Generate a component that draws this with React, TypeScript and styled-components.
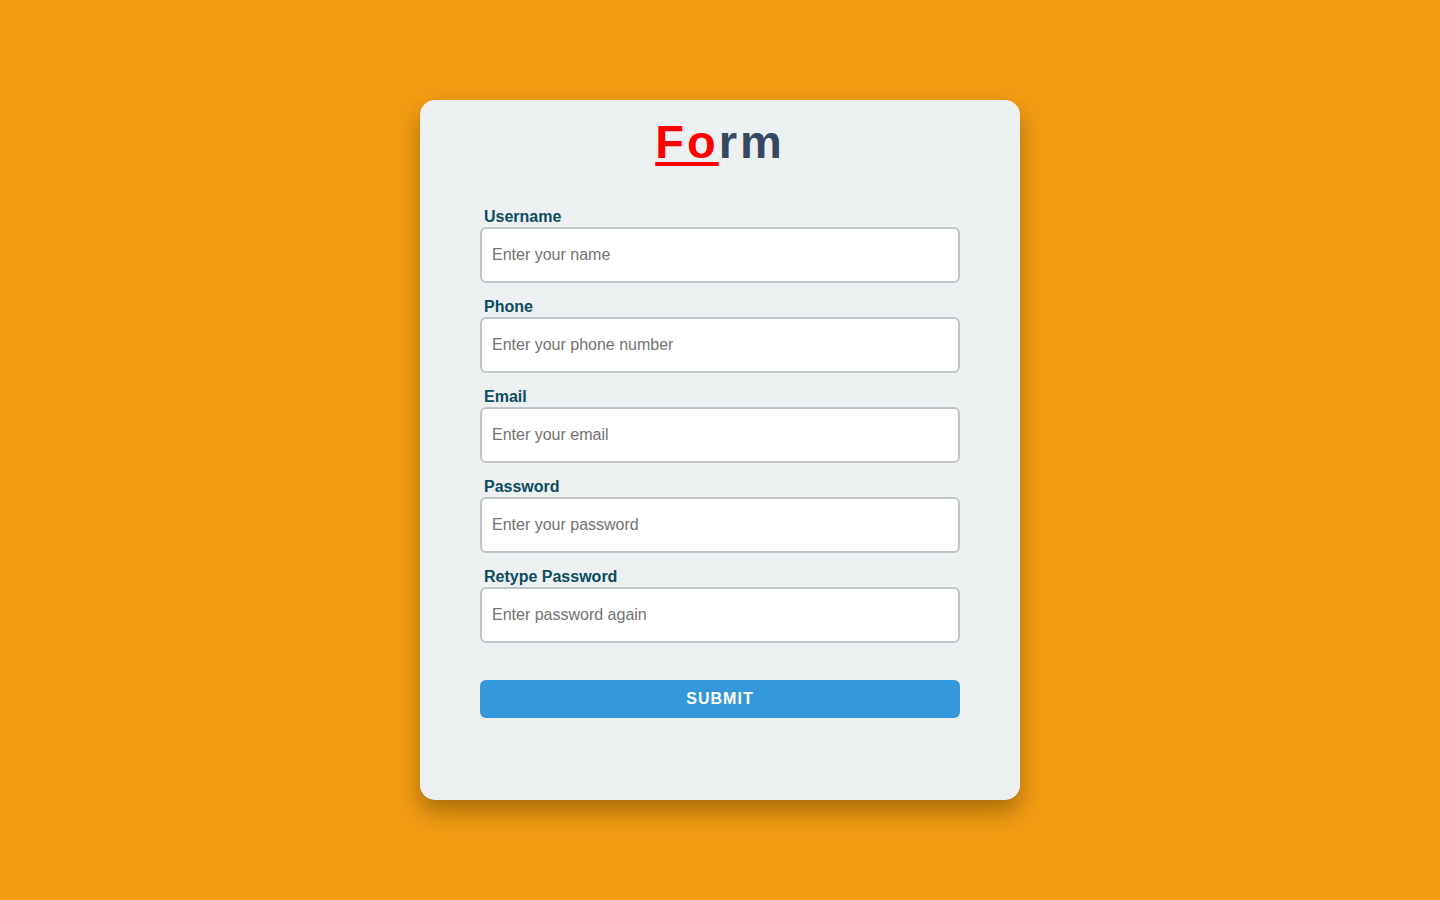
import React from "react";
import styled, { createGlobalStyle } from "styled-components";

const GlobalStyle = createGlobalStyle`
  html, body { margin: 0; padding: 0; }
  body {
    background: #f39c12;
    font-family: "Liberation Sans", Arial, sans-serif;
  }
  * { box-sizing: border-box; }
`;

const Page = styled.div`
  min-height: 100vh;
  display: flex;
  align-items: center;
  justify-content: center;
`;

const Card = styled.div`
  width: 600px;
  height: 700px;
  background: #ecf0f1;
  border-radius: 15px;
  box-shadow: 0 12px 24px rgba(0, 0, 0, 0.3);
  padding: 16px 60px 0;
  display: flex;
  flex-direction: column;
  align-items: stretch;
`;

const Title = styled.h1`
  margin: 0 0 39px;
  text-align: center;
  font-size: 47px;
  line-height: 52px;
  font-weight: 700;
  letter-spacing: 3px;
  color: #34495e;
`;

const Accent = styled.span`
  color: #ff0000;
  text-decoration: underline;
  text-decoration-thickness: 4px;
  text-underline-offset: 4px;
`;

const Form = styled.form`
  display: flex;
  flex-direction: column;
`;

const Field = styled.div`
  display: flex;
  flex-direction: column;
  margin-bottom: 14px;
`;

const Label = styled.label`
  display: block;
  padding-left: 4px;
  font-size: 16px;
  line-height: 20px;
  font-weight: 700;
  color: #0d4b5e;
`;

const Input = styled.input`
  width: 100%;
  height: 56px;
  padding: 0 10px;
  border: 2px solid #c0c5c9;
  border-radius: 6px;
  background: #fff;
  font-family: "Liberation Sans", Arial, sans-serif;
  font-size: 16px;
  color: #333;
  outline: none;
  &::placeholder {
    color: #737373;
  }
`;

const Submit = styled.button`
  margin-top: 23px;
  height: 38px;
  width: 100%;
  border: none;
  border-radius: 6px;
  background: #3498db;
  color: #fff;
  font-family: "Liberation Sans", Arial, sans-serif;
  font-size: 16px;
  font-weight: 700;
  letter-spacing: 1px;
  text-transform: uppercase;
  cursor: pointer;
`;

const fields = [
  { id: "username", label: "Username", type: "text", placeholder: "Enter your name" },
  { id: "phone", label: "Phone", type: "tel", placeholder: "Enter your phone number" },
  { id: "email", label: "Email", type: "email", placeholder: "Enter your email" },
  { id: "password", label: "Password", type: "password", placeholder: "Enter your password" },
  { id: "retype", label: "Retype Password", type: "password", placeholder: "Enter password again" },
];

export default function App() {
  return (
    <>
      <GlobalStyle />
      <Page>
        <Card>
          <Title>
            <Accent>Fo</Accent>rm
          </Title>
          <Form onSubmit={(e) => e.preventDefault()}>
            {fields.map((f) => (
              <Field key={f.id}>
                <Label htmlFor={f.id}>{f.label}</Label>
                <Input id={f.id} type={f.type} placeholder={f.placeholder} />
              </Field>
            ))}
            <Submit type="submit">Submit</Submit>
          </Form>
        </Card>
      </Page>
    </>
  );
}
